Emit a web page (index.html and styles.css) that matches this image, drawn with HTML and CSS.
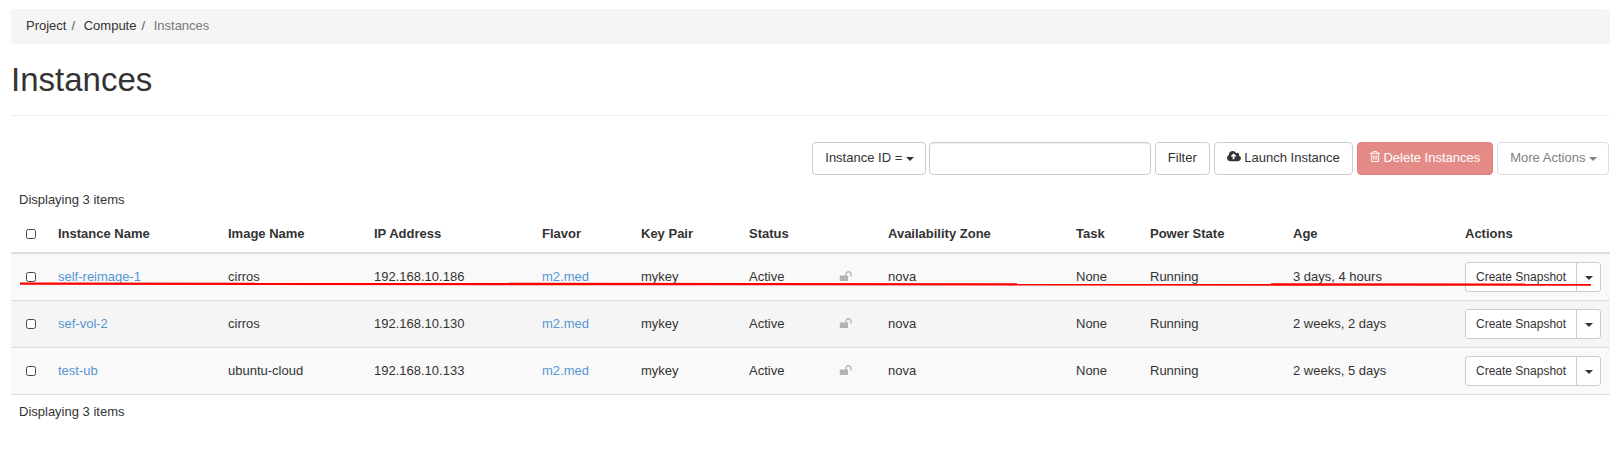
FILE: index.html
```html
<!DOCTYPE html>
<html lang="en">
<head>
    <meta charset="UTF-8">
    <meta name="viewport" content="width=device-width, initial-scale=1.0">
    <title>Instances</title>
    <link rel="stylesheet" href="styles.css">
</head>
<body>
    <ol class="breadcrumb">
        <li>Project</li>
        <li>Compute</li>
        <li class="active">Instances</li>
    </ol>

    <h1 class="page-header">Instances</h1>

    <!-- Table actions -->
    <div class="toolbar">
        <button class="btn filter-field">Instance ID = <span class="caret"></span></button>
        <input class="filter-input" type="text">
        <button class="btn filter-btn">Filter</button>
        <button class="btn launch-btn">
            <svg class="icon icon-cloud" viewBox="0 0 1920 1792"><path d="M1280 864q0-14-9-23l-352-352q-9-9-23-9t-23 9l-351 351q-10 12-10 24 0 14 9 23t23 9h224v352q0 13 9.5 22.5t22.5 9.5h192q13 0 22.5-9.5t9.5-22.5v-352h224q13 0 22.5-9.5t9.5-22.5zm640 288q0 159-112.5 271.5t-271.5 112.5h-1088q-185 0-316.5-131.5t-131.5-316.5q0-130 70-240t188-165q-2-30-2-43 0-212 150-362t362-150q156 0 285.5 87t188.5 231q71-62 166-62 106 0 181 75t75 181q0 76-41 138 130 31 213.5 135.5t83.5 238.5z"/></svg>
            Launch Instance
        </button>
        <button class="btn btn-danger">
            <svg class="icon icon-trash" viewBox="0 0 1408 1792"><path d="M512 736v576q0 14-9 23t-23 9h-64q-14 0-23-9t-9-23v-576q0-14 9-23t23-9h64q14 0 23 9t9 23zm256 0v576q0 14-9 23t-23 9h-64q-14 0-23-9t-9-23v-576q0-14 9-23t23-9h64q14 0 23 9t9 23zm256 0v576q0 14-9 23t-23 9h-64q-14 0-23-9t-9-23v-576q0-14 9-23t23-9h64q14 0 23 9t9 23zm128 724v-948h-896v948q0 22 7 40.5t14.5 27 10.5 8.5h832q3 0 10.5-8.5t14.5-27 7-40.5zm-672-1076h448l-48-117q-7-9-17-11h-317q-10 2-17 11zm928 32v64q0 14-9 23t-23 9h-96v948q0 83-47 143.5t-113 60.5h-832q-66 0-113-58.5t-47-141.5v-952h-96q-14 0-23-9t-9-23v-64q0-14 9-23t23-9h309l70-167q15-37 54-63t79-26h320q40 0 79 26t54 63l70 167h309q14 0 23 9t9 23z"/></svg>
            Delete Instances
        </button>
        <button class="btn btn-disabled">More Actions <span class="caret"></span></button>
    </div>

    <div class="count count-top">Displaying 3 items</div>

    <table class="instances">
        <colgroup>
            <col class="col-check">
            <col class="col-name">
            <col class="col-image">
            <col class="col-ip">
            <col class="col-flavor">
            <col class="col-key">
            <col class="col-status">
            <col class="col-lock">
            <col class="col-zone">
            <col class="col-task">
            <col class="col-power">
            <col class="col-age">
            <col class="col-actions">
        </colgroup>
        <thead>
            <tr>
                <th><input class="check" type="checkbox"></th>
                <th>Instance Name</th>
                <th>Image Name</th>
                <th>IP Address</th>
                <th>Flavor</th>
                <th>Key Pair</th>
                <th>Status</th>
                <th></th>
                <th>Availability Zone</th>
                <th>Task</th>
                <th>Power State</th>
                <th>Age</th>
                <th>Actions</th>
            </tr>
        </thead>
        <tbody>
            <tr>
                <td><input class="check" type="checkbox"></td>
                <td><a href="#">self-reimage-1</a></td>
                <td>cirros</td>
                <td>192.168.10.186</td>
                <td><a href="#">m2.med</a></td>
                <td>mykey</td>
                <td>Active</td>
                <td><svg class="lock" viewBox="0 0 1728 1536"><path d="M1728 448v256q0 26-19 45t-45 19h-64q-26 0-45-19t-19-45v-256q0-106-75-181t-181-75-181 75-75 181v192h96q40 0 68 28t28 68v576q0 40-28 68t-68 28h-960q-40 0-68-28t-28-68v-576q0-40 28-68t68-28h672v-192q0-185 131.5-316.5t316.5-131.5 316.5 131.5 131.5 316.5z"/></svg></td>
                <td>nova</td>
                <td>None</td>
                <td>Running</td>
                <td>3 days, 4 hours</td>
                <td><div class="btn-group"><button class="btn-sm">Create Snapshot</button><button class="btn-sm btn-toggle"><span class="caret"></span></button></div></td>
            </tr>
            <tr>
                <td><input class="check" type="checkbox"></td>
                <td><a href="#">sef-vol-2</a></td>
                <td>cirros</td>
                <td>192.168.10.130</td>
                <td><a href="#">m2.med</a></td>
                <td>mykey</td>
                <td>Active</td>
                <td><svg class="lock" viewBox="0 0 1728 1536"><path d="M1728 448v256q0 26-19 45t-45 19h-64q-26 0-45-19t-19-45v-256q0-106-75-181t-181-75-181 75-75 181v192h96q40 0 68 28t28 68v576q0 40-28 68t-68 28h-960q-40 0-68-28t-28-68v-576q0-40 28-68t68-28h672v-192q0-185 131.5-316.5t316.5-131.5 316.5 131.5 131.5 316.5z"/></svg></td>
                <td>nova</td>
                <td>None</td>
                <td>Running</td>
                <td>2 weeks, 2 days</td>
                <td><div class="btn-group"><button class="btn-sm">Create Snapshot</button><button class="btn-sm btn-toggle"><span class="caret"></span></button></div></td>
            </tr>
            <tr>
                <td><input class="check" type="checkbox"></td>
                <td><a href="#">test-ub</a></td>
                <td>ubuntu-cloud</td>
                <td>192.168.10.133</td>
                <td><a href="#">m2.med</a></td>
                <td>mykey</td>
                <td>Active</td>
                <td><svg class="lock" viewBox="0 0 1728 1536"><path d="M1728 448v256q0 26-19 45t-45 19h-64q-26 0-45-19t-19-45v-256q0-106-75-181t-181-75-181 75-75 181v192h96q40 0 68 28t28 68v576q0 40-28 68t-68 28h-960q-40 0-68-28t-28-68v-576q0-40 28-68t68-28h672v-192q0-185 131.5-316.5t316.5-131.5 316.5 131.5 131.5 316.5z"/></svg></td>
                <td>nova</td>
                <td>None</td>
                <td>Running</td>
                <td>2 weeks, 5 days</td>
                <td><div class="btn-group"><button class="btn-sm">Create Snapshot</button><button class="btn-sm btn-toggle"><span class="caret"></span></button></div></td>
            </tr>
        </tbody>
    </table>

    <div class="count count-bottom">Displaying 3 items</div>

    <!-- Red strike drawn over the first row -->
    <svg class="strike" width="1621" height="462"><line x1="20" y1="283.7" x2="1591" y2="284.7"/></svg>
</body>
</html>
```

FILE: styles.css
```css
* {
    box-sizing: border-box;
}
body {
    position: relative;
    margin: 0;
    padding: 9px 11px 0;
    font-family: "Liberation Sans", Arial, sans-serif;
    font-size: 13px;
    line-height: 18.57px;
    color: #333;
    background: #fff;
}
a {
    color: #5596d2;
    text-decoration: none;
}
.breadcrumb {
    display: flex;
    margin: 0;
    padding: 8px 15px;
    list-style: none;
    background-color: #f5f5f5;
    border-radius: 4px;
}
.breadcrumb li + li::before {
    content: "/\00a0";
    padding: 0 5px;
    color: #555;
}
.breadcrumb .active {
    color: #777;
}
.breadcrumb .active::before {
    color: #555;
}
.page-header {
    margin: 18px 0 0;
    padding-bottom: 17px;
    font-size: 33px;
    font-weight: 400;
    line-height: 36.3px;
    border-bottom: 1px solid #eee;
}
.toolbar {
    display: flex;
    justify-content: flex-end;
    margin-top: 26px;
    padding-right: 1px;
    height: 33px;
}
.btn, .btn-sm, .filter-input {
    font-family: inherit;
    color: #333;
    background: #fff;
    border: 1px solid #ccc;
}
.btn {
    margin-left: 4px;
    padding: 0 12px 1px;
    font-size: 13px;
    height: 33px;
    border-radius: 4px;
    white-space: nowrap;
}
.filter-field {
    margin-left: 0;
    padding: 0 11px 1px 12px;
}
.filter-input {
    width: 222px;
    height: 33px;
    margin-left: 3px;
    border-radius: 4px;
    box-shadow: inset 0 1px 1px rgba(0, 0, 0, .075);
}
.btn-danger {
    color: #fff;
    background: #e48b88;
    border-color: #e07f7c;
}
.btn-disabled {
    padding: 0 11px 1px 12px;
    color: #808080;
    border-color: #ddd;
}
.caret {
    display: inline-block;
    width: 0;
    height: 0;
    vertical-align: middle;
    border-top: 4px solid;
    border-right: 4px solid transparent;
    border-left: 4px solid transparent;
}
.icon {
    vertical-align: -1px;
    fill: currentColor;
}
.icon-cloud {
    width: 14px;
    height: 13px;
}
.icon-trash {
    width: 10px;
    height: 13px;
}
.count {
    padding-left: 8px;
}
.count-top {
    margin-top: 16px;
}
.count-bottom {
    margin-top: 8px;
}
.instances {
    width: 100%;
    margin-top: 6px;
    border-collapse: collapse;
    table-layout: fixed;
}
.instances th, .instances td {
    padding: 8px;
    text-align: left;
    vertical-align: middle;
}
.instances th {
    font-weight: 700;
    height: 38px;
    border-bottom: 2px solid #ddd;
}
.instances td {
    height: 47px;
    border-bottom: 1px solid #ddd;
    background-color: #f9f9f9;
}
.instances tbody tr:nth-child(2) td {
    background-color: #f5f5f5;
}
.col-check { width: 39px; }
.col-name { width: 170px; }
.col-image { width: 146px; }
.col-ip { width: 168px; }
.col-flavor { width: 99px; }
.col-key { width: 108px; }
.col-status { width: 90px; }
.col-lock { width: 49px; }
.col-zone { width: 188px; }
.col-task { width: 74px; }
.col-power { width: 143px; }
.col-age { width: 172px; }
.check {
    appearance: none;
    display: block;
    width: 10px;
    height: 10px;
    margin: 0 0 0 7px;
    background: #fff;
    border: 1.3px solid #444;
    border-radius: 2.5px;
}
.lock {
    display: block;
    width: 13px;
    height: 11px;
    margin-top: -1px;
    fill: #b3b3b3;
}
.btn-group {
    display: flex;
}
.btn-sm {
    height: 30px;
    padding: 0 10px;
    font-size: 12px;
    border-radius: 3px 0 0 3px;
    white-space: nowrap;
}
.btn-toggle {
    width: 25px;
    margin-left: -1px;
    padding: 0;
    border-radius: 0 3px 3px 0;
}
.strike {
    position: absolute;
    top: 0;
    left: 0;
    pointer-events: none;
}
.strike line {
    stroke: #f00;
    stroke-width: 2.3;
}
```
